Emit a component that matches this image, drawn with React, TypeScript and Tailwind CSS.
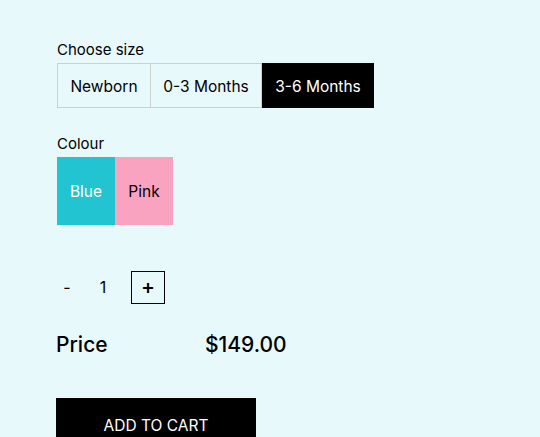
import React from "react";

export default function App() {
  return (
    <div
      className="w-[540px] h-[437px] overflow-hidden bg-[#e8f9fc] text-black"
      style={{ fontFamily: "Inter, 'Noto Sans', sans-serif" }}
    >
      <div className="pt-[40px] pl-[57px] flex flex-col">
        <div className="text-[15px] leading-[20px]">Choose size</div>
        <div className="flex mt-[3px] h-[45px] text-[15.5px]">
          <div className="w-[94px] border border-[#cfcfcf] flex items-center justify-center pt-[2px]">Newborn</div>
          <div className="w-[111px] border border-l-0 border-[#cfcfcf] flex items-center justify-center pt-[2px]">0-3 Months</div>
          <div className="w-[112px] bg-black text-white flex items-center justify-center pt-[2px]">3-6 Months</div>
        </div>
        <div className="text-[15px] leading-[20px] mt-[26px]">Colour</div>
        <div className="flex mt-[3px] h-[68px] text-[15.5px]">
          <div className="w-[58px] bg-[#22c4d2] text-white flex items-center justify-center pt-[1px]">Blue</div>
          <div className="w-[58px] bg-[#f9a3c0] flex items-center justify-center pt-[1px]">Pink</div>
        </div>
        <div className="flex items-center mt-[45px] h-[34px] text-[16px]">
          <div className="w-[20px] text-center">-</div>
          <div className="w-[20px] text-center ml-[16px]">1</div>
          <div className="w-[34px] h-[33px] border border-black flex items-center justify-center ml-[18px] text-[21px] font-medium">+</div>
        </div>
        <div className="flex items-center mt-[27px] h-[28px] text-[21px] font-medium -ml-[1px]">
          <div className="w-[149px]">Price</div>
          <div>$149.00</div>
        </div>
        <div className="mt-[39px] w-[200px] h-[60px] bg-black text-white text-[15.5px] flex justify-center pt-[16px] -ml-[1px]">
          ADD TO CART
        </div>
      </div>
    </div>
  );
}
